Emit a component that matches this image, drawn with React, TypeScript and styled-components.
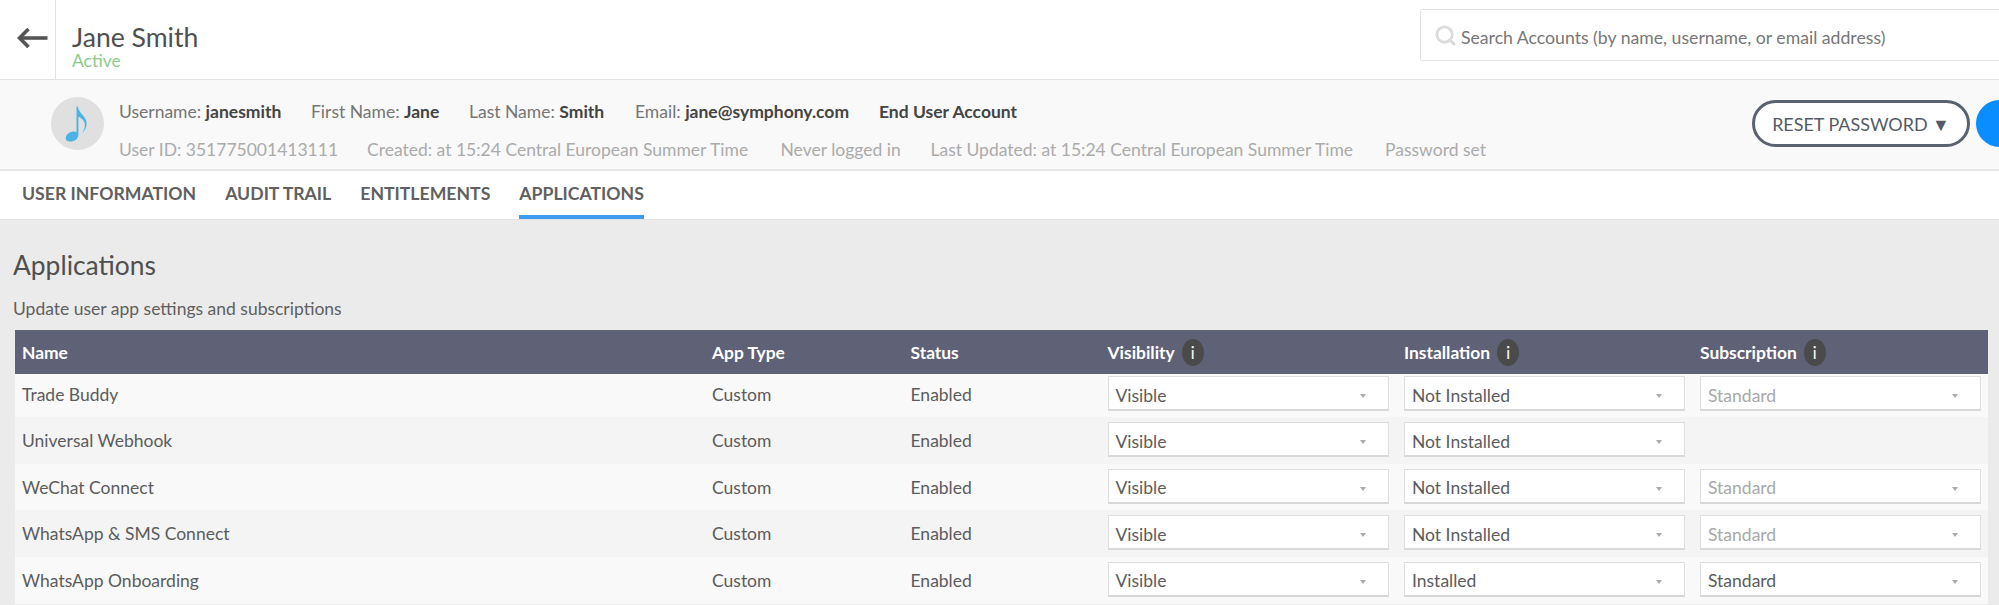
import React from "react";
import styled, { createGlobalStyle } from "styled-components";
import { Search } from "lucide-react";

const GlobalStyle = createGlobalStyle`
  html, body {
    margin: 0;
    height: 605px;
    overflow: hidden;
    background: #ebebeb;
    font-family: Lato, "Open Sans", sans-serif;
    color: #555;
  }
`;

const Page = styled.div`
  width: 1999px;
  height: 605px;
  overflow: hidden;
`;

const TopBar = styled.header`
  display: flex;
  height: 79px;
  background: #fff;
`;

const BackCell = styled.div`
  width: 56px;
  border-right: 1px solid #e2e2e2;
  display: flex;
  align-items: center;
  padding: 0 0 4px 17px;
  box-sizing: border-box;
  flex: none;
`;

const TitleBlock = styled.div`
  padding: 23px 0 0 16px;
  flex: 1;
`;

const Title = styled.div`
  font-size: 26.6px;
  line-height: 29px;
  color: #4f4f4f;
`;

const Status = styled.div`
  font-size: 17.5px;
  line-height: 18px;
  color: #8ccb8c;
`;

const SearchBox = styled.div`
  width: 600px;
  height: 52px;
  margin: 9px -21px 0 0;
  background: #fff;
  border: 1px solid #e2e2e2;
  border-radius: 2px;
  display: flex;
  align-items: center;
  gap: 4px;
  padding: 4px 0 0 13px;
  box-sizing: border-box;
  font-size: 17.65px;
  color: #777;
  flex: none;
  svg {
    color: #dcdcdc;
    margin-top: -4px;
  }
`;

const InfoBar = styled.section`
  height: 92px;
  box-sizing: border-box;
  background: #f9f9f9;
  border-top: 1px solid #e2e2e2;
  border-bottom: 2px solid #e6e6e6;
  display: flex;
  padding: 17px 0 0 51px;
`;

const Avatar = styled.div`
  width: 53px;
  height: 53px;
  border-radius: 50%;
  background: #e0e0e0;
  display: flex;
  align-items: center;
  justify-content: center;
  flex: none;
  svg {
    display: block;
  }
`;

const Meta = styled.div`
  margin-left: 15px;
  flex: 1;
  padding-top: 3px;
`;

const MetaRow = styled.div<{ $muted?: boolean }>`
  display: flex;
  height: ${(p) => (p.$muted ? "22px" : "39px")};
  line-height: ${(p) => (p.$muted ? "22px" : "24px")};
  font-size: 17.5px;
  color: ${(p) => (p.$muted ? "#ababab" : "#757575")};
  white-space: nowrap;
`;

const MetaItem = styled.span<{ $w: number }>`
  width: ${(p) => p.$w}px;
  flex: none;
  b {
    color: #444;
    font-weight: 700;
  }
`;

const Actions = styled.div`
  display: flex;
  gap: 6px;
  padding-top: 3px;
  flex: none;
  margin-right: -29px;
`;

const ResetButton = styled.button`
  width: 218px;
  height: 47px;
  border: 3px solid #5a6270;
  border-radius: 24px;
  background: #fff;
  font: 400 17.95px Lato, sans-serif;
  color: #555b66;
  padding: 2px 0 0;
`;

const RoundButton = styled.div`
  width: 52px;
  height: 47px;
  border-radius: 24px;
  background: #0a8dff;
`;

const Tabs = styled.nav`
  height: 49px;
  box-sizing: border-box;
  background: #fff;
  border-bottom: 1px solid #e2e2e2;
  display: flex;
  gap: 29px;
  padding-left: 22px;
`;

const Tab = styled.div<{ $active?: boolean }>`
  font-size: 17.65px;
  font-weight: 700;
  color: #606060;
  line-height: 46px;
  height: 48px;
  box-sizing: border-box;
  border-bottom: 4px solid ${(p) => (p.$active ? "#3d9bf2" : "transparent")};
`;

const Content = styled.main`
  padding: 30px 11px 0 13px;
`;

const Heading = styled.h1`
  margin: 0;
  font-size: 26.4px;
  font-weight: 400;
  line-height: 30px;
  color: #4f4f4f;
`;

const Subheading = styled.p`
  margin: 19px 0 0;
  font-size: 17.5px;
  line-height: 20px;
  color: #5f5f5f;
`;

const Table = styled.div`
  margin: 11px 0 0 2px;
`;

const columns = "697px 198.5px 197px 296.5px 296px 1fr";

const HeaderRow = styled.div`
  display: grid;
  grid-template-columns: ${columns};
  height: 44px;
  background: #5f6177;
  align-items: center;
  color: #fff;
  font-size: 17.4px;
  font-weight: 700;
`;

const HeaderCell = styled.div<{ $first?: boolean }>`
  display: flex;
  align-items: center;
  gap: 7px;
  padding-left: ${(p) => (p.$first ? "7px" : "0")};
`;

const InfoBadge = styled.span`
  width: 22px;
  height: 27px;
  border-radius: 50%;
  background: #4a4a4a;
  color: #f2f2f2;
  font-size: 18px;
  font-weight: 400;
  display: inline-flex;
  align-items: center;
  justify-content: center;
`;

const Row = styled.div<{ $odd: boolean; $first: boolean }>`
  display: grid;
  grid-template-columns: ${columns};
  align-items: start;
  height: ${(p) => (p.$first ? "43px" : "46.67px")};
  padding-top: ${(p) => (p.$first ? "2px" : "5px")};
  box-sizing: border-box;
  background: ${(p) => (p.$odd ? "#f9f9f9" : "#f4f4f4")};
  font-size: 17.5px;
  color: #5c5c5c;
`;

const Cell = styled.div<{ $first?: boolean }>`
  line-height: 38px;
  padding-left: ${(p) => (p.$first ? "7px" : "0")};
`;

const Select = styled.div<{ $muted?: boolean }>`
  width: 281px;
  height: 35px;
  box-sizing: border-box;
  background: #fff;
  border: 1px solid #dedede;
  border-bottom: 2px solid #d8d8d8;
  display: flex;
  align-items: center;
  justify-content: space-between;
  padding: 4px 22px 0 7px;
  font-size: 17.5px;
  color: ${(p) => (p.$muted ? "#a8a8a8" : "#5c5c5c")};
`;

const Caret = styled.span`
  width: 0;
  height: 0;
  margin-top: 2px;
  border-left: 3px solid transparent;
  border-right: 3px solid transparent;
  border-top: 4px solid #aaa;
`;

const NoteIcon = () => (
  <svg width="26" height="36" viewBox="0 0 26 36" fill="#4bb3e4">
    <path d="M11.5 0.5 L12.8 0.5 C13.4 4.5 15.6 7 18 9.5 C21.5 13.2 22.8 18 20.5 22.5 C19.6 24.4 18.4 26 17 27.2 C18.6 24.8 20.2 21.6 19.9 18 C19.6 14.9 16.6 12 13.4 10.4 L13.4 29 C13.4 32.8 9.4 35.5 5.4 35.5 C2.2 35.5 0.4 33.8 0.8 31.4 C1.3 28.2 5.2 25.6 8.8 25.6 C9.8 25.6 10.8 25.8 11.5 26.2 Z" />
  </svg>
);

const BackArrow = () => (
  <svg width="31" height="24" viewBox="0 0 31 24" fill="none" stroke="#555" strokeWidth="3.6">
    <path d="M30.5 12 H3" />
    <path d="M11.5 3 L2.5 12 L11.5 21" />
  </svg>
);

const Info = () => <InfoBadge>i</InfoBadge>;

type App = {
  name: string;
  installed?: boolean;
  subscription?: boolean;
  subscribed?: boolean;
};

const apps: App[] = [
  { name: "Trade Buddy", subscription: true },
  { name: "Universal Webhook" },
  { name: "WeChat Connect", subscription: true },
  { name: "WhatsApp & SMS Connect", subscription: true },
  { name: "WhatsApp Onboarding", installed: true, subscription: true, subscribed: true },
];

const DropDown = ({ value, muted }: { value: string; muted?: boolean }) => (
  <Select $muted={muted}>
    {value}
    <Caret />
  </Select>
);

export default function AppPage() {
  return (
    <Page>
      <GlobalStyle />
      <TopBar>
        <BackCell>
          <BackArrow />
        </BackCell>
        <TitleBlock>
          <Title>Jane Smith</Title>
          <Status>Active</Status>
        </TitleBlock>
        <SearchBox>
          <Search size={23} strokeWidth={3} />
          Search Accounts (by name, username, or email address)
        </SearchBox>
      </TopBar>

      <InfoBar>
        <Avatar>
          <NoteIcon />
        </Avatar>
        <Meta>
          <MetaRow>
            <MetaItem $w={192}>Username: <b>janesmith</b></MetaItem>
            <MetaItem $w={158}>First Name: <b>Jane</b></MetaItem>
            <MetaItem $w={166}>Last Name: <b>Smith</b></MetaItem>
            <MetaItem $w={244}>Email: <b>jane@symphony.com</b></MetaItem>
            <MetaItem $w={200}><b>End User Account</b></MetaItem>
          </MetaRow>
          <MetaRow $muted>
            <MetaItem $w={248}>User ID: 351775001413111</MetaItem>
            <MetaItem $w={413.5}>Created: at 15:24 Central European Summer Time</MetaItem>
            <MetaItem $w={150}>Never logged in</MetaItem>
            <MetaItem $w={454.5}>Last Updated: at 15:24 Central European Summer Time</MetaItem>
            <MetaItem $w={120}>Password set</MetaItem>
          </MetaRow>
        </Meta>
        <Actions>
          <ResetButton>RESET PASSWORD ▼</ResetButton>
          <RoundButton />
        </Actions>
      </InfoBar>

      <Tabs>
        <Tab>USER INFORMATION</Tab>
        <Tab>AUDIT TRAIL</Tab>
        <Tab>ENTITLEMENTS</Tab>
        <Tab $active>APPLICATIONS</Tab>
      </Tabs>

      <Content>
        <Heading>Applications</Heading>
        <Subheading>Update user app settings and subscriptions</Subheading>
        <Table>
          <HeaderRow>
            <HeaderCell $first>Name</HeaderCell>
            <HeaderCell>App Type</HeaderCell>
            <HeaderCell>Status</HeaderCell>
            <HeaderCell>Visibility <Info /></HeaderCell>
            <HeaderCell>Installation <Info /></HeaderCell>
            <HeaderCell>Subscription <Info /></HeaderCell>
          </HeaderRow>
          {apps.map((app, i) => (
            <Row key={app.name} $odd={i % 2 === 0} $first={i === 0}>
              <Cell $first>{app.name}</Cell>
              <Cell>Custom</Cell>
              <Cell>Enabled</Cell>
              <DropDown value="Visible" />
              <DropDown value={app.installed ? "Installed" : "Not Installed"} />
              {app.subscription ? <DropDown value="Standard" muted={!app.subscribed} /> : <div />}
            </Row>
          ))}
        </Table>
      </Content>
    </Page>
  );
}
